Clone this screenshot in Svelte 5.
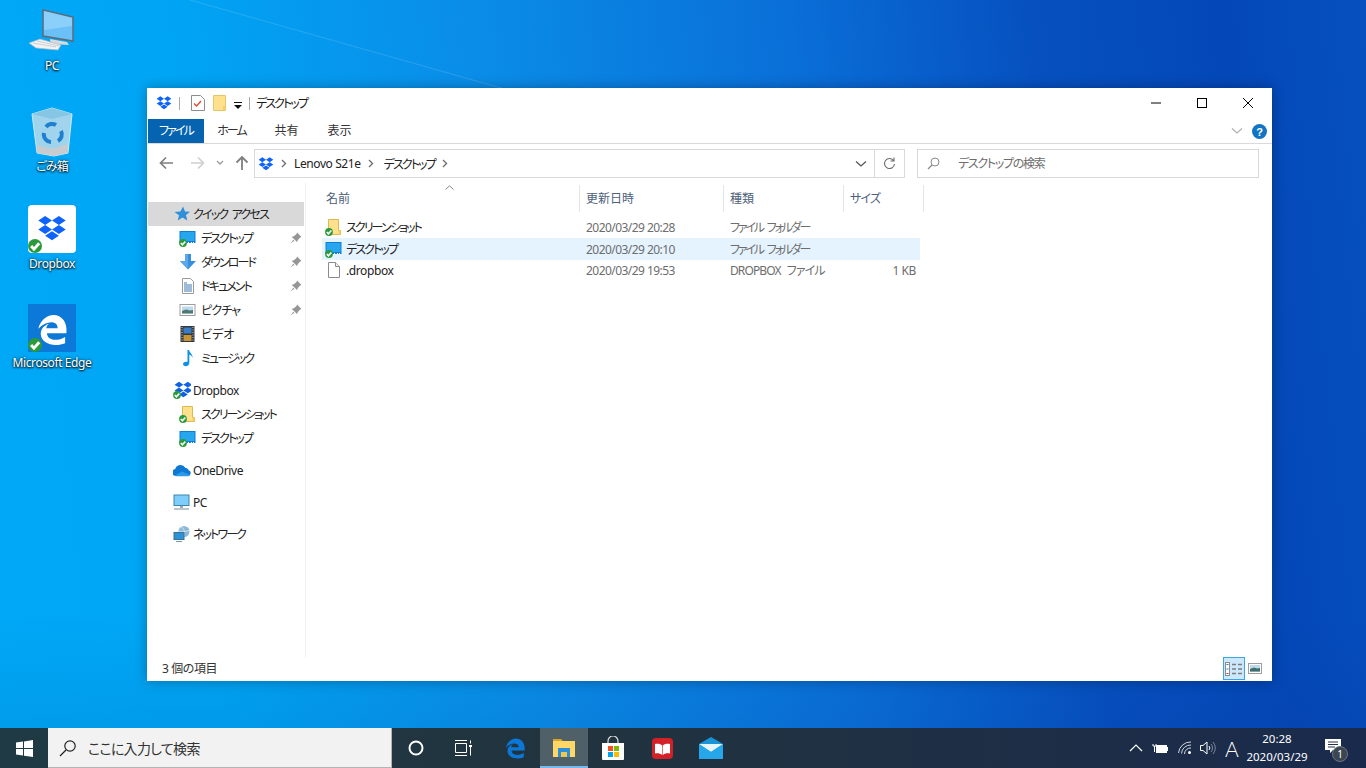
<script>
  const quick = [
    { label: 'デスクトップ', icon: 'desktop', pin: true, fit: 'ja' },
    { label: 'ダウンロード', icon: 'download', pin: true, fit: 'ja' },
    { label: 'ドキュメント', icon: 'doc', pin: true, fit: 'ja' },
    { label: 'ピクチャ', icon: 'pic', pin: true, fit: 'ja-s' },
    { label: 'ビデオ', icon: 'video', pin: false, fit: 'ja-n' },
    { label: 'ミュージック', icon: 'music', pin: false, fit: 'ja' }
  ];

  const files = [
    { name: 'スクリーンショット', icon: 'folder', date: '2020/03/29 20:28', type: 'ファイル フォルダー', size: '', fit: 'ja', typeFit: 'ja-t' },
    { name: 'デスクトップ', icon: 'desktop', date: '2020/03/29 20:10', type: 'ファイル フォルダー', size: '', selected: true, fit: 'ja', typeFit: 'ja-t' },
    { name: '.dropbox', icon: 'file', date: '2020/03/29 19:53', type: 'DROPBOX ファイル', size: '1 KB', fit: '', typeFit: 'ja-d' }
  ];
</script>

{#snippet check(x, y, r)}
  <circle cx={x} cy={y} {r} fill="#2b9a3a" />
  <path d="M{x - r * 0.55} {y} l{r * 0.4} {r * 0.45} l{r * 0.75} {-r * 0.85}" fill="none" stroke="#fff" stroke-width={r * 0.42} />
{/snippet}

{#snippet dropboxGlyph(fill)}
  <path {fill} d="M6.5 2 12 5.6 6.5 9.2 1 5.6ZM17.5 2 23 5.6 17.5 9.2 12 5.6ZM6.5 9.2 12 12.8 6.5 16.4 1 12.8ZM17.5 9.2 23 12.8 17.5 16.4 12 12.8ZM12 14.2 17.5 17.8 12 21.4 6.5 17.8Z" />
{/snippet}

{#snippet edgeGlyph(fill)}
  <path {fill} d="M1 11C3 3 9 0 13 0 20 0 24.5 6 23.5 14.5H8C8 20 16 21.5 22.5 17.5V22.5C14 26 3 23 3 15 3 11 6 8 9.5 7 8.3 8 7.6 9 7.5 10.5H16.5C16.5 4.5 8 4 1 11Z" />
{/snippet}

{#snippet crumb()}
  <svg class="crumb" width="6" height="9" viewBox="0 0 6 9"><path d="M1 1l3.500 3.500L1 8" fill="none" stroke="#707070" stroke-width="1.400" /></svg>
{/snippet}

{#snippet icon(name, badge)}
  <svg class="ico" width="18" height="18" viewBox="0 0 18 18">
    {#if name === 'folder'}
      <path d="M3.5 1.5h10v11h2v4h-12Z" fill="#ffe08c" stroke="#e0b94e" />
      <path d="M13.5 12.5h2v4h-2Z" fill="#f6cf62" />
    {:else if name === 'desktop'}
      <rect x="0.5" y="2" width="16" height="12" fill="#0f7fd6" />
      <rect x="1.5" y="3" width="14" height="9" fill="#27a6f0" />
      <path d="M9 13h1v1H9ZM12 13h1v1h-1ZM14 13h1v1h-1Z" fill="#fff" />
    {:else if name === 'download'}
      <path d="M6 1h6v7h5l-8 8.5L1 8h5Z" fill="#3a8fdc" />
      <path d="M6 1h3v15.5L1 8h5Z" fill="#5aa9ea" />
    {:else if name === 'doc'}
      <path d="M3.5 1.5h8l3 3v12h-11Z" fill="#fff" stroke="#9a9a9a" />
      <path d="M5 6h3M5 8h8M5 10h8M5 12h8M5 14h8" stroke="#3c78b4" />
    {:else if name === 'pic'}
      <rect x="1" y="3.5" width="15" height="11" fill="#fff" stroke="#9d9d9d" />
      <rect x="3" y="5.5" width="11" height="7" fill="#bcd9ef" />
      <path d="M3 10 7 8.5l4 1 3-.5v3.5H3Z" fill="#4c7a70" />
    {:else if name === 'video'}
      <rect x="1.5" y="1" width="14" height="16" fill="#33363a" />
      <rect x="4.5" y="2.5" width="8" height="6" fill="#3a7cc4" />
      <rect x="4.5" y="10" width="8" height="6" fill="#c79531" />
      <path d="M2.5 2.5h1M2.5 5h1M2.5 7.5h1M2.5 10h1M2.5 12.5h1M2.5 15h1M13.5 2.5h1M13.5 5h1M13.5 7.5h1M13.5 10h1M13.5 12.5h1M13.5 15h1" stroke="#ddd" />
    {:else if name === 'music'}
      <path d="M8.5 1h1.6c.3 3 4 4 3.4 8-.5-2-2-3-3.2-3.4V14c0 2-1.700 3.200-3.500 3.200C5.300 17.200 4 16.300 4 15c0-1.700 2.200-2.800 4.500-2.100Z" fill="#0f8fe8" />
    {:else if name === 'file'}
      <path d="M3.500 1.500h7l4 4v11h-11Z" fill="#fff" stroke="#8c8c8c" />
      <path d="M10.500 1.500v4h4" fill="#eee" stroke="#8c8c8c" />
    {:else if name === 'dropbox'}
      <g transform="scale(.8) translate(1 -1)">{@render dropboxGlyph('#0f62e6')}</g>
    {:else if name === 'onedrive'}
      <path d="M1 14.500a3.500 3.500 0 0 1 1.200-6.500A5.500 5.500 0 0 1 12.300 6.800a3.800 3.800 0 0 1 3.400 2.400A3 3 0 0 1 15 15H3Z" fill="#0f78d4" />
      <path d="M1.500 14.800 9 10.500l8 3.500-1.500 1.200H3Z" fill="#2a9be8" />
    {:else if name === 'pc'}
      <rect x="1" y="2" width="15" height="10.500" fill="#7fcdfa" stroke="#3f86ad" />
      <path d="M7 13h3v2H7Z" fill="#9aa9b2" />
      <path d="M1 16h15" stroke="#a5b3bd" stroke-width="1.500" />
    {:else if name === 'net'}
      <circle cx="11" cy="6.500" r="5.500" fill="#8db8d8" />
      <path d="M8 2c3 1 4 4 3 9M6 6c3 1 6 1 10-.5" stroke="#e8f2f8" fill="none" stroke-width=".7" />
      <rect x="1" y="7.500" width="10" height="7" fill="#2c93d8" stroke="#3b7196" />
      <path d="M3 16.500h6" stroke="#7a98ac" />
    {/if}
    {#if badge}{@render check(4, 14, 3.900)}{/if}
  </svg>
{/snippet}

<div class="screen">
  <main class="desktop">
    <div class="shortcut">
      <svg width="52" height="52" viewBox="-1 -1 52 52">
        <path d="M16 2 46 9V33L16 28Z" fill="#6cc0f8" stroke="#5e6c78" stroke-width="1.500" />
        <path d="M17 3 45 10V18L17 22Z" fill="#98d6fc" opacity=".7" />
        <path d="M23 31 40 34 42 37 26 36 23 33Z" fill="#d5dade" />
        <path d="M2 35 13 31 34 37 31 42 9 40Z" fill="#f0f2f4" stroke="#aeb6bd" stroke-width=".7" />
        <path d="M6 35 29 39M10 33 32 38" stroke="#b8c0c6" stroke-width=".7" />
      </svg>
      <span>PC</span>
    </div>
    <div class="shortcut">
      <svg width="52" height="52" viewBox="-2 -1 52 52">
        <path d="M4 7 24 1 44 7 40 46 26 49 9 46Z" fill="#9fd4ec" stroke="#c8ecf8" />
        <path d="M4 7 24 12 44 7 24 1Z" fill="#86c6e4" />
        <path d="M8 38 24 42 40 37 40 46 26 49 9 46Z" fill="#c9ccce" />
        <g fill="none" stroke="#1d80d0" stroke-width="4">
          <path d="M18 20a7.500 7.500 0 0 1 10-2" />
          <path d="M33 24a7.500 7.500 0 0 1-3 10" />
          <path d="M23 35a7.500 7.500 0 0 1-7-9" />
        </g>
      </svg>
      <span class="ja-s bin">ごみ箱</span>
    </div>
    <div class="shortcut">
      <svg class="tile" width="48" height="48" viewBox="0 0 48 48">
        <rect width="48" height="48" rx="4" fill="#fff" />
        <g transform="translate(9 8.500) scale(1.250)">{@render dropboxGlyph('#0f62fe')}</g>
        {@render check(7, 41, 7)}
      </svg>
      <span>Dropbox</span>
    </div>
    <div class="shortcut">
      <svg class="tile" width="48" height="48" viewBox="0 0 48 48">
        <rect width="48" height="48" fill="#0c78d8" />
        <g transform="translate(9 11) scale(1.250)">{@render edgeGlyph('#fff')}</g>
        {@render check(7, 41, 7)}
      </svg>
      <span>Microsoft Edge</span>
    </div>
  </main>

  <section class="window">
    <header class="titlebar">
      <svg width="16" height="16" viewBox="0 0 24 24">{@render dropboxGlyph('#0f62fe')}</svg>
      <i class="sep"></i>
      <svg class="qa1" width="14" height="16" viewBox="0 0 14 16">
        <path d="M.5.500h9l4 4v11H.5Z" fill="#fff" stroke="#8c8c8c" />
        <path d="M3 8.500l2.500 2.500L10 6" fill="none" stroke="#e0492a" stroke-width="1.300" />
      </svg>
      <svg class="qa2" width="13" height="16" viewBox="0 0 13 16">
        <path d="M.5.500h12v15H.5Z" fill="#ffe08c" stroke="#e6c766" />
        <path d="M10 11h2.500v4.500H10Z" fill="#f6cf62" />
      </svg>
      <svg class="qa3" width="8" height="8" viewBox="0 0 8 8"><path d="M0 1h8v1H0ZM0 4h8L4 8Z" fill="#111" /></svg>
      <i class="sep sep2"></i>
      <span class="wintitle ja">デスクトップ</span>
      <div class="controls">
        <svg width="46" height="30" viewBox="0 0 46 30"><path d="M18 15h10" stroke="#000" /></svg>
        <svg width="46" height="30" viewBox="0 0 46 30"><rect x="18.500" y="10.500" width="9" height="9" fill="none" stroke="#000" /></svg>
        <svg width="46" height="30" viewBox="0 0 46 30"><path d="M18 10l10 10M28 10 18 20" stroke="#000" /></svg>
      </div>
    </header>

    <nav class="ribbon">
      <span class="tab file ja">ファイル</span>
      <span class="tab home ja">ホーム</span>
      <span class="tab share ja-n">共有</span>
      <span class="tab view ja-n">表示</span>
      <svg class="collapse" width="12" height="8" viewBox="0 0 12 8"><path d="M1 1.500 6 6l5-4.500" fill="none" stroke="#b0b0b0" stroke-width="1.200" /></svg>
      <svg class="help" width="15" height="15" viewBox="0 0 15 15">
        <circle cx="7.500" cy="7.500" r="7.500" fill="#1274c4" />
        <text x="7.500" y="11.500" text-anchor="middle" class="q">?</text>
      </svg>
    </nav>

    <div class="addressrow">
      <div class="navbtns">
        <svg width="16" height="14" viewBox="0 0 16 14"><path d="M14 7H2M7 1.500 1.500 7 7 12.500" fill="none" stroke="#7f7f7f" stroke-width="1.700" /></svg>
        <svg class="fwd" width="16" height="14" viewBox="0 0 16 14"><path d="M2 7h12M9 1.500 14.500 7 9 12.500" fill="none" stroke="#d0d0d0" stroke-width="1.700" /></svg>
        <svg class="recent" width="8" height="6" viewBox="0 0 8 6"><path d="M1 1l3 3 3-3" fill="none" stroke="#9a9a9a" stroke-width="1.300" /></svg>
        <svg class="up" width="14" height="16" viewBox="0 0 14 16"><path d="M7 15V2M1.500 7.500 7 2l5.500 5.500" fill="none" stroke="#7f7f7f" stroke-width="1.800" /></svg>
      </div>
      <div class="addressbox">
        <svg width="16" height="16" viewBox="0 0 24 24">{@render dropboxGlyph('#0f62fe')}</svg>
        {@render crumb()}
        <span>Lenovo S21e</span>
        {@render crumb()}
        <span class="ja here">デスクトップ</span>
        {@render crumb()}
        <svg class="addrdown" width="12" height="8" viewBox="0 0 12 8"><path d="M1 1.500 6 6l5-4.500" fill="none" stroke="#555" stroke-width="1.300" /></svg>
        <i class="addrdiv"></i>
        <svg class="refresh" width="13" height="13" viewBox="0 0 13 13"><path d="M10.500 3.500A5 5 0 1 0 11.500 7M11 .5v3.500H7.500" fill="none" stroke="#6d6d6d" stroke-width="1.100" /></svg>
      </div>
      <div class="searchbox">
        <svg width="13" height="13" viewBox="0 0 13 13"><circle cx="8" cy="5" r="4" fill="none" stroke="#8a8a8a" /><path d="M5 8 1 12" stroke="#8a8a8a" stroke-width="1.200" /></svg>
        <span class="ja-m hint">デスクトップの検索</span>
      </div>
    </div>

    <div class="content">
      <aside class="sidebar">
        <div class="navrow top active">
          <svg class="ico" width="18" height="18" viewBox="0 0 18 18">
            <path d="M10 1.500l2 5 5 .3-4 3.300 1.300 5.400L9.500 12.500 4.800 15.500 6 10.200 1.500 7l6-.5Z" fill="#2f8fd8" />
          </svg>
          <span class="ja-q">クイック アクセス</span>
        </div>
        {#each quick as item}
          <div class="navrow sub">
            {@render icon(item.icon, item.icon === 'desktop')}
            <span class={item.fit}>{item.label}</span>
            {#if item.pin}
              <svg class="pin" width="12" height="12" viewBox="0 0 11 11"><path d="M6.500.5l4 4-1.500.7-2 2.300L6.700 9.500 1.500 4.300l2-.3L5.800 2Z M3 7l-2.500 3.500L4 8Z" fill="#969696" /></svg>
            {/if}
          </div>
        {/each}

        <div class="navrow top gap">
          {@render icon('dropbox', true)}
          <span>Dropbox</span>
        </div>
        <div class="navrow sub">
          {@render icon('folder', true)}
          <span class="ja">スクリーンショット</span>
        </div>
        <div class="navrow sub">
          {@render icon('desktop', true)}
          <span class="ja">デスクトップ</span>
        </div>

        <div class="navrow top gap">
          {@render icon('onedrive', false)}
          <span>OneDrive</span>
        </div>
        <div class="navrow top gap">
          {@render icon('pc', false)}
          <span>PC</span>
        </div>
        <div class="navrow top gap">
          {@render icon('net', false)}
          <span class="ja">ネットワーク</span>
        </div>
      </aside>

      <div class="listing">
        <div class="columns">
          <div class="col c-name first ja-n">名前
            <svg class="sort" width="9" height="5" viewBox="0 0 9 5"><path d="M.5 4.500 4.500.8l4 3.700" fill="none" stroke="#888" /></svg>
          </div>
          <div class="col c-date ja-n">更新日時</div>
          <div class="col c-type ja-n">種類</div>
          <div class="col c-size ja-s">サイズ</div>
        </div>
        <div class="rows">
          {#each files as f}
            <div class="row" class:selected={f.selected}>
              <div class="cell c-name name">
                {@render icon(f.icon, f.icon !== 'file')}
                <span class={f.fit}>{f.name}</span>
              </div>
              <div class="cell c-date nums">{f.date}</div>
              <div class="cell c-type {f.typeFit}">{f.type}</div>
              <div class="cell c-size right">{f.size}</div>
            </div>
          {/each}
        </div>
      </div>
    </div>

    <footer class="statusbar">
      <span class="count">3 個の項目</span>
      <div class="viewbtns">
        <div class="viewbtn on">
          <svg width="18" height="14" viewBox="0 0 18 14">
            <rect x=".5" y=".5" width="4" height="13" fill="#fff" stroke="#8c8c8c" />
            <path d="M1.500 2.500h2M1.500 7h2" stroke="#3c78b4" />
            <path d="M1.500 11.500h2" stroke="#c8362e" />
            <path d="M7 2.500h4M13 2.500h4M7 7h4M13 7h4M7 11.500h4M13 11.500h4" stroke="#7d7d7d" stroke-width="1.300" />
          </svg>
        </div>
        <div class="viewbtn">
          <svg width="14" height="11" viewBox="0 0 14 11">
            <rect x=".5" y=".5" width="13" height="10" fill="#fff" stroke="#9d9d9d" />
            <rect x="2" y="2" width="10" height="7" fill="#bcd9ef" />
            <path d="M2 6l4-1.500 3 1 3-.5v3.500H2Z" fill="#3f6f68" />
          </svg>
        </div>
      </div>
    </footer>
  </section>

  <footer class="taskbar">
    <button class="start" aria-label="スタート">
      <svg width="17" height="17" viewBox="0 0 17 17"><path d="M0 2.500 7 1.500V8H0ZM8 1.400 17 0V8H8ZM0 9H7V15.500L0 14.500ZM8 9H17V17L8 15.700Z" fill="#fff" /></svg>
    </button>
    <div class="tasksearch">
      <svg width="18" height="18" viewBox="0 0 18 18"><circle cx="11" cy="7" r="5.200" fill="none" stroke="#222" stroke-width="1.200" /><path d="M7 11 1 17" stroke="#222" stroke-width="1.300" /></svg>
      <span>ここに入力して検索</span>
    </div>
    <div class="tb">
      <svg width="16" height="16" viewBox="0 0 16 16"><circle cx="8" cy="8" r="6.500" fill="none" stroke="#fff" stroke-width="2" /></svg>
    </div>
    <div class="tb taskview">
      <svg width="18" height="16" viewBox="0 0 18 16"><path d="M1 .5h12M1 15.500h12M1.500 3.500h11v9h-11ZM16.500.5v3M16.500 7v8.500" fill="none" stroke="#fff" /><rect x="15" y="5" width="3" height="2" fill="#fff" /></svg>
    </div>
    <div class="tb edge">
      <svg width="20" height="21" viewBox="0 0 24 24">{@render edgeGlyph('#0b78d7')}</svg>
    </div>
    <div class="tb active">
      <svg width="22" height="19" viewBox="0 0 22 19">
        <path d="M0 1h8l2 2H0Z" fill="#d9a521" />
        <path d="M0 3h22v16H0Z" fill="#ffd767" />
        <path d="M5 10h12v9H5Z" fill="#2a8ed8" />
        <path d="M8 14h6v5H8Z" fill="#f2c64a" />
      </svg>
    </div>
    <div class="tb">
      <svg width="24" height="24" viewBox="0 0 24 24">
        <path d="M7 8V5a5 5 0 0 1 10 0v3" fill="none" stroke="#ddd" stroke-width="1.200" />
        <path d="M1 7h22v16a1 1 0 0 1-1 1H2a1 1 0 0 1-1-1Z" fill="#fff" />
        <path d="M7 10h5v5H7Z" fill="#f25022" /><path d="M13 10h5v5h-5Z" fill="#7fba00" />
        <path d="M7 16h5v5H7Z" fill="#00a4ef" /><path d="M13 16h5v5h-5Z" fill="#ffb900" />
      </svg>
    </div>
    <div class="tb">
      <svg width="21" height="21" viewBox="0 0 21 21">
        <rect width="21" height="21" rx="4" fill="#d42027" />
        <path d="M3 6c3-.5 6 0 7.200 1.500V17C8.500 15.500 6 15 3 15.500ZM18 6c-3-.5-6 0-7.200 1.500V17c1.700-1.500 4.200-2 7.200-1.500Z" fill="#fff" />
      </svg>
    </div>
    <div class="tb">
      <svg width="24" height="22" viewBox="0 0 24 22">
        <path d="M0 7 12 0l12 7v15H0Z" fill="#1a94d8" />
        <path d="M0 7h24L12 15Z" fill="#e6f4fc" />
        <path d="M0 7l12 8 12-8v15H0Z" fill="#26a7ea" />
      </svg>
    </div>

    <div class="tray">
      <svg class="t-chev" width="14" height="8" viewBox="0 0 14 8"><path d="M1 7l6-6 6 6" fill="none" stroke="#fff" stroke-width="1.200" /></svg>
      <svg class="t-batt" width="16" height="11" viewBox="0 0 16 11"><path d="M1 1v2h3V1M2.500 3v6" stroke="#fff" fill="none" /><rect x="4.500" y="2.500" width="10" height="7" fill="#fff" stroke="#fff" /><rect x="14" y="4" width="2" height="4" fill="#fff" /></svg>
      <svg class="t-wifi" width="14" height="14" viewBox="0 0 14 14"><g fill="none" stroke="#d5d9de"><path d="M.5 12A12 12 0 0 1 13 1" /><path d="M3.500 12.500A9 9 0 0 1 13 4" /><path d="M6.500 13A6 6 0 0 1 13 7" /></g><circle cx="11.500" cy="11.500" r="1.500" fill="#fff" /></svg>
      <svg class="t-vol" width="16" height="14" viewBox="0 0 16 14"><path d="M.5 4.500h2.500L7 1v12L3 9.500H.5Z" fill="none" stroke="#fff" /><path d="M9 5a3 3 0 0 1 0 4" fill="none" stroke="#fff" /><path d="M11 3a6 6 0 0 1 0 8M13 1a9 9 0 0 1 0 12" fill="none" stroke="#7c8799" /></svg>
      <span class="t-ime">A</span>
      <div class="clock"><span>20:28</span><span>2020/03/29</span></div>
      <div class="notify">
        <svg width="16" height="14" viewBox="0 0 16 14"><path d="M0 0h16v11H8l-3 3v-3H0Z" fill="#fff" /><path d="M3 3h10M3 5.500h10M3 8h7" stroke="#26344a" /></svg>
        <span class="badge">1</span>
      </div>
    </div>
  </footer>
</div>

<style>
  :global(body) {
    margin: 0;
    overflow: hidden;
  }

  .screen {
    position: relative;
    width: 1366px;
    height: 768px;
    overflow: hidden;
    display: flex;
    flex-direction: column;
    font-family: "Noto Sans", "Noto Sans CJK JP", sans-serif;
    font-size: 12px;
    font-feature-settings: "palt";
    letter-spacing: -0.4px;
    color: #1a1a1a;
    background:
      linear-gradient(15.8deg, transparent 54.6%, rgba(255, 255, 255, 0.13) 55%, transparent 55.4%) 0 0 / 600px 88px no-repeat,
      linear-gradient(180deg, transparent 80%, rgba(0, 40, 120, 0.12) 100%),
      linear-gradient(84deg, #00a8f6 0%, #00a6f5 16%, #0a8de8 38%, #0a6fd8 60%, #0650c0 77%, #0448b8 90%, #0650c0 100%);
  }

  /* per-label squeeze: the original UI font has narrow kana */
  .ja {
    letter-spacing: -1.9px;
  }

  .ja-m {
    letter-spacing: -1.300px;
  }

  .ja-s {
    letter-spacing: -0.800px;
  }

  .ja-n {
    letter-spacing: 0;
  }

  .ja-t {
    letter-spacing: -2.200px;
    word-spacing: 3px;
  }

  .ja-d {
    letter-spacing: -0.900px;
    word-spacing: 4px;
  }

  .ja-q {
    letter-spacing: -1.800px;
    word-spacing: 3px;
  }

  .desktop {
    flex: 1;
    display: flex;
    flex-direction: column;
    width: 104px;
    padding-top: 7px;
  }

  .shortcut {
    height: 99px;
    display: flex;
    flex-direction: column;
    align-items: center;
    color: #fff;
    text-shadow: 0 1px 2px #000, 0 0 3px rgba(0, 0, 0, 0.75);
    line-height: 16px;
  }

  .shortcut svg {
    display: block;
    height: 52px;
    flex: none;
  }

  .shortcut .tile {
    height: 48px;
    margin-bottom: 4px;
  }

  .shortcut span {
    margin-top: -1px;
    white-space: nowrap;
  }

  .shortcut .bin {
    margin-top: 1px;
  }

  .window {
    position: absolute;
    left: 147px;
    top: 88px;
    width: 1125px;
    height: 593px;
    background: #fff;
    display: flex;
    flex-direction: column;
    box-shadow: 0 0 12px rgba(0, 0, 0, 0.3);
  }

  .titlebar {
    height: 30px;
    display: flex;
    align-items: center;
    padding-left: 9px;
    flex: none;
  }

  .sep {
    width: 1px;
    height: 13px;
    background: #a8a8a8;
    margin-left: 7px;
  }

  .sep2 {
    margin-left: 7px;
  }

  .qa1 {
    margin-left: 11px;
  }

  .qa2 {
    margin-left: 8px;
  }

  .qa3 {
    margin-left: 8px;
    margin-top: 3px;
  }

  .wintitle {
    margin-left: 6px;
  }

  .controls {
    margin-left: auto;
    display: flex;
    padding-right: 1px;
  }

  .ribbon {
    height: 24px;
    margin-top: 1px;
    border-bottom: 1px solid #dadada;
    display: flex;
    align-items: center;
    flex: none;
    color: #333;
  }

  .tab {
    line-height: 24px;
    text-align: center;
  }

  .file {
    margin-left: 1px;
    width: 56px;
    background: #0563af;
    color: #fff;
  }

  .home {
    width: 55px;
  }

  .share {
    width: 55px;
  }

  .view {
    width: 51px;
  }

  .collapse {
    margin-left: auto;
    margin-right: 9px;
  }

  .help {
    margin-right: 5px;
  }

  .q {
    font: bold 11px "Liberation Sans", sans-serif;
    fill: #fff;
  }

  .addressrow {
    height: 28px;
    margin-top: 5px;
    padding-left: 12px;
    display: flex;
    flex: none;
  }

  .navbtns {
    display: flex;
    align-items: center;
    width: 95px;
    flex: none;
  }

  .fwd {
    margin-left: 14px;
  }

  .recent {
    margin-left: 11px;
  }

  .up {
    margin-left: 11px;
  }

  .addressbox,
  .searchbox {
    box-sizing: border-box;
    height: 29px;
    border: 1px solid #d9d9d9;
    display: flex;
    align-items: center;
  }

  .addressbox {
    width: 651px;
    padding-left: 3px;
    gap: 7px;
    color: #222;
  }

  .here {
    margin-left: 3px;
  }

  .addrdown {
    margin-left: auto;
  }

  .addrdiv {
    width: 1px;
    height: 27px;
    background: #d9d9d9;
  }

  .refresh {
    margin-left: 1px;
    margin-right: 8px;
  }

  .searchbox {
    width: 342px;
    margin-left: 12px;
    padding-left: 9px;
    gap: 18px;
    color: #6d6d6d;
  }

  .hint {
    margin-top: -1px;
  }

  .content {
    flex: 1;
    display: flex;
    min-height: 0;
  }

  .sidebar {
    width: 159px;
    flex: none;
    border-right: 1px solid #f0f0f0;
    padding-top: 19px;
    margin-top: 6px;
    box-sizing: border-box;
  }

  .navrow {
    height: 24px;
    display: flex;
    align-items: center;
    position: relative;
    color: #222;
    white-space: nowrap;
  }

  .navrow .ico {
    flex: none;
  }

  .top {
    padding-left: 25px;
    width: 156px;
    margin-left: 1px;
    box-sizing: border-box;
    gap: 2px;
  }

  .active {
    background: #d9d9d9;
  }

  .gap {
    margin-top: 8px;
  }

  .sub {
    padding-left: 32px;
    gap: 4px;
  }

  .pin {
    position: absolute;
    right: 3px;
    top: 6px;
  }

  .listing {
    flex: 1;
    padding-left: 16px;
  }

  .columns {
    display: flex;
    height: 27px;
    margin-top: 8px;
    color: #4c607a;
  }

  .col {
    box-sizing: border-box;
    border-right: 1px solid #e5e5e5;
    padding-left: 6px;
    line-height: 27px;
    position: relative;
  }

  .first {
    padding-left: 4px;
  }

  .sort {
    position: absolute;
    left: 123px;
    top: 0;
  }

  .c-name {
    width: 258px;
  }

  .c-date {
    width: 144px;
  }

  .c-type {
    width: 120px;
  }

  .c-size {
    width: 80px;
  }

  .nums {
    letter-spacing: -0.55px;
  }

  .rows {
    margin-top: 4px;
    width: 598px;
  }

  .row {
    display: flex;
    height: 22px;
    align-items: center;
    color: #6d6d6d;
  }

  .row:last-child {
    margin-top: -1px;
  }

  .selected {
    background: #e5f3ff;
  }

  .cell {
    box-sizing: border-box;
    padding-left: 6px;
    white-space: nowrap;
  }

  .name {
    display: flex;
    align-items: center;
    gap: 3px;
    color: #222;
    padding-left: 3px;
  }

  .right {
    text-align: right;
    padding-right: 4px;
    width: 76px;
  }

  .statusbar {
    flex: none;
    height: 24px;
    display: flex;
    align-items: center;
    padding-left: 15px;
    color: #333;
  }

  .count {
    margin-top: -2px;
  }

  .viewbtns {
    margin-left: auto;
    margin-right: 10px;
    margin-top: -1px;
    display: flex;
    align-items: center;
    gap: 3px;
  }

  .viewbtn {
    display: flex;
    align-items: center;
    justify-content: center;
    width: 14px;
    height: 23px;
  }

  .viewbtn.on {
    box-sizing: border-box;
    width: 22px;
    background: #cce8ff;
    border: 1px solid #3ea6dc;
  }

  .taskbar {
    height: 40px;
    flex: none;
    display: flex;
    align-items: stretch;
    background: linear-gradient(90deg, #1f3a44 0%, #21333f 45%, #1a2a4c 100%);
  }

  .start {
    width: 48px;
    border: 0;
    padding: 0;
    background: none;
    display: flex;
    align-items: center;
    justify-content: center;
  }

  .tasksearch {
    box-sizing: border-box;
    width: 344px;
    background: #f2f2f2;
    border-right: 1px solid #b4b4b4;
    border-bottom: 1px solid #b4b4b4;
    display: flex;
    align-items: center;
    padding-left: 11px;
    gap: 11px;
    font-size: 14px;
    letter-spacing: -0.7px;
    color: #333;
  }

  .tb {
    width: 48px;
    display: flex;
    align-items: center;
    justify-content: center;
    box-sizing: border-box;
    flex: none;
    margin-right: 1px;
  }

  .taskview svg {
    margin-right: 4px;
  }

  .edge {
    margin-left: 1px;
  }

  .tb.active {
    background: #4f6068;
    border-bottom: 2px solid #76b9ed;
  }

  .tray {
    margin-left: auto;
    display: flex;
    align-items: center;
    color: #fff;
    height: 40px;
    letter-spacing: 0;
  }

  .t-batt {
    margin-left: 9px;
  }

  .t-wifi {
    margin-left: 10px;
  }

  .t-vol {
    margin-left: 8px;
  }

  .t-ime {
    font-family: "Lato", "Noto Sans", sans-serif;
    font-weight: 300;
    font-size: 21px;
    margin-left: 9px;
    width: 14px;
  }

  .clock {
    display: flex;
    flex-direction: column;
    align-items: center;
    width: 64px;
    margin-left: 6px;
    line-height: 18px;
    font-size: 11.500px;
    white-space: nowrap;
  }

  .notify {
    position: relative;
    width: 48px;
    margin-right: 9px;
    display: flex;
    justify-content: center;
    margin-top: -4px;
  }

  .badge {
    position: absolute;
    left: 23px;
    top: 7px;
    box-sizing: border-box;
    width: 16px;
    height: 16px;
    border-radius: 50%;
    background: #3d4550;
    border: 1px solid #6b7480;
    text-align: center;
    line-height: 14px;
    font-size: 10px;
  }
</style>
